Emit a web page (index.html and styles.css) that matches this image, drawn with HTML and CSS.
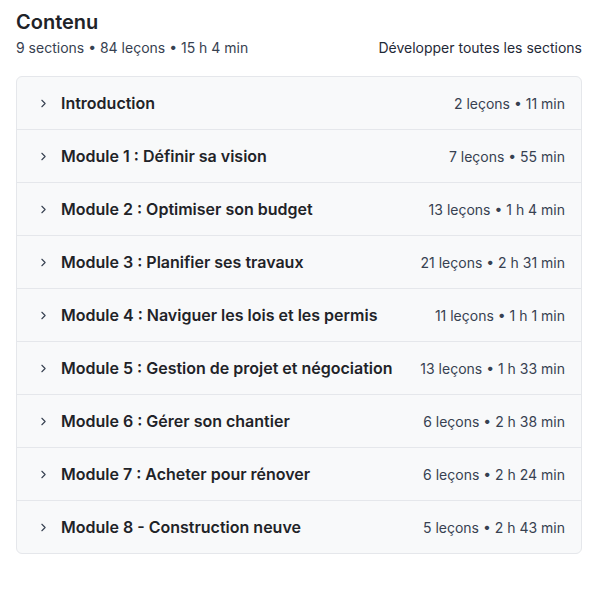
FILE: index.html
```html
<!DOCTYPE html>
<html lang="fr">
<head>
<meta charset="utf-8">
<link rel="stylesheet" href="styles.css">
</head>
<body>
<div class="page">
  <h2 class="title">Contenu</h2>
  <div class="summary">
    <span>9 sections • 84 leçons • 15 h 4 min</span>
    <span class="expand">Développer toutes les sections</span>
  </div>
  <div class="card">
    <div class="row"><div class="left"><svg class="chev" viewBox="0 0 16 16"><path d="M6 4l4 4-4 4"/></svg><span class="name">Introduction</span></div><span class="meta">2 leçons • 11 min</span></div>
    <div class="row"><div class="left"><svg class="chev" viewBox="0 0 16 16"><path d="M6 4l4 4-4 4"/></svg><span class="name">Module 1 : Définir sa vision</span></div><span class="meta">7 leçons • 55 min</span></div>
    <div class="row"><div class="left"><svg class="chev" viewBox="0 0 16 16"><path d="M6 4l4 4-4 4"/></svg><span class="name">Module 2 : Optimiser son budget</span></div><span class="meta">13 leçons • 1 h 4 min</span></div>
    <div class="row"><div class="left"><svg class="chev" viewBox="0 0 16 16"><path d="M6 4l4 4-4 4"/></svg><span class="name">Module 3 : Planifier ses travaux</span></div><span class="meta">21 leçons • 2 h 31 min</span></div>
    <div class="row"><div class="left"><svg class="chev" viewBox="0 0 16 16"><path d="M6 4l4 4-4 4"/></svg><span class="name">Module 4 : Naviguer les lois et les permis</span></div><span class="meta">11 leçons • 1 h 1 min</span></div>
    <div class="row"><div class="left"><svg class="chev" viewBox="0 0 16 16"><path d="M6 4l4 4-4 4"/></svg><span class="name">Module 5 : Gestion de projet et négociation</span></div><span class="meta">13 leçons • 1 h 33 min</span></div>
    <div class="row"><div class="left"><svg class="chev" viewBox="0 0 16 16"><path d="M6 4l4 4-4 4"/></svg><span class="name">Module 6 : Gérer son chantier</span></div><span class="meta">6 leçons • 2 h 38 min</span></div>
    <div class="row"><div class="left"><svg class="chev" viewBox="0 0 16 16"><path d="M6 4l4 4-4 4"/></svg><span class="name">Module 7 : Acheter pour rénover</span></div><span class="meta">6 leçons • 2 h 24 min</span></div>
    <div class="row"><div class="left"><svg class="chev" viewBox="0 0 16 16"><path d="M6 4l4 4-4 4"/></svg><span class="name">Module 8 - Construction neuve</span></div><span class="meta">5 leçons • 2 h 43 min</span></div>
  </div>
</div>
</body>
</html>
```

FILE: styles.css
```css
* { box-sizing: border-box; }
body {
  margin: 0;
  background: #ffffff;
  font-family: Inter, "Noto Sans", sans-serif;
  color: #1f2328;
}
.page {
  padding: 8px 16px;
}
.title {
  margin: 0;
  font-size: 20px;
  line-height: 28px;
  font-weight: 600;
  color: #1f2328;
}
.summary {
  display: flex;
  justify-content: space-between;
  align-items: center;
  font-size: 14px;
  line-height: 24px;
  color: #374151;
  margin-bottom: 16px;
}
.expand { color: #1f2937; }
.card {
  background: #f8f9fa;
  border: 1px solid #e5e7eb;
  border-radius: 6px;
}
.row {
  height: 53px;
  display: flex;
  align-items: center;
  justify-content: space-between;
  padding: 0 16px 0 20px;
  border-top: 1px solid #e5e7eb;
}
.row:first-child { border-top: none; height: 52px; }
.left {
  display: flex;
  align-items: center;
  gap: 11px;
}
.chev {
  width: 13px;
  height: 13px;
  fill: none;
  stroke: #374151;
  stroke-width: 1.4;
  stroke-linecap: round;
  stroke-linejoin: round;
}
.name {
  font-size: 16px;
  font-weight: 600;
  color: #1f2328;
}
.meta {
  font-size: 14px;
  color: #374151;
}
```
